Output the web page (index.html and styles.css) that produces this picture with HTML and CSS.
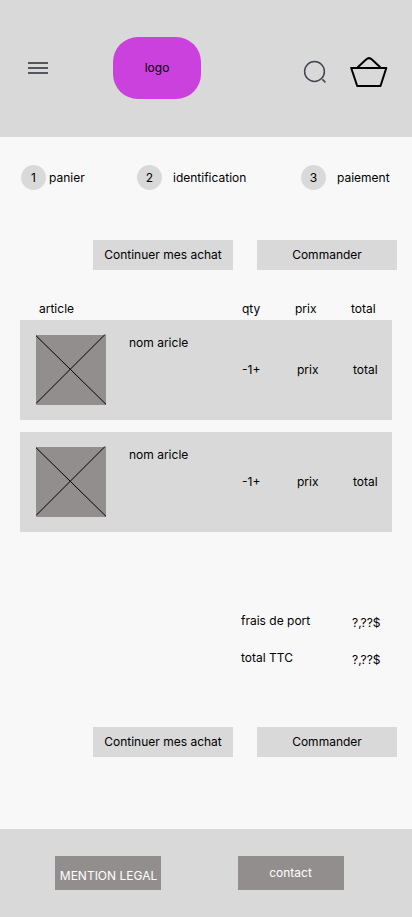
FILE: index.html
```html
<!DOCTYPE html>
<html lang="fr">
<head>
<meta charset="utf-8">
<meta name="viewport" content="width=device-width, initial-scale=1">
<title>Panier</title>
<link rel="stylesheet" href="styles.css">
</head>
<body>
<header class="header">
  <svg class="menu" width="20" height="12" viewBox="0 0 20 12" fill="#54575c"><path d="M0 0h20v2H0zM0 5h20v2H0zM0 10h20v2H0z"/></svg>
  <div class="logo">logo</div>
  <svg class="search" width="24" height="24" viewBox="0 0 24 24" fill="none" stroke="#41454c" stroke-width="1.5"><circle cx="11.5" cy="11.5" r="9.9"/><path d="M19.4 19.4l3 3"/></svg>
  <svg class="basket" width="38" height="32" viewBox="0 0 38 32" fill="none" stroke="#000" stroke-width="2" stroke-linejoin="round"><path d="M1.2 12H36.3L30.5 30H7.2zM7.5 11.5L16.1 3.4Q19 .9 21.9 3.4L30.5 11.5"/></svg>
</header>
<main>
  <ol class="steps">
    <li class="step"><span class="num">1</span>panier</li>
    <li class="step"><span class="num">2</span>identification</li>
    <li class="step"><span class="num">3</span>paiement</li>
  </ol>
  <div class="actions"><a class="button">Continuer mes achat</a><a class="button">Commander</a></div>
  <section class="cart">
    <div class="heads"><span>article</span><span>qty</span><span>prix</span><span>total</span></div>
    <article class="item">
      <svg class="thumb" width="70" height="71" viewBox="0 -1 70 71" stroke="#000"><path d="M0 0h70v70H0z" fill="#928e8d" stroke="none"/><path d="M0 .7L70 69.3M0 68.5L69-.5" fill="none"/></svg>
      <span class="name">nom aricle</span><span>-1+</span><span>prix</span><span>total</span>
    </article>
    <article class="item">
      <svg class="thumb" width="70" height="71" viewBox="0 -1 70 71" stroke="#000"><path d="M0 0h70v70H0z" fill="#928e8d" stroke="none"/><path d="M0 .7L70 69.3M0 68.5L69-.5" fill="none"/></svg>
      <span class="name">nom aricle</span><span>-1+</span><span>prix</span><span>total</span>
    </article>
  </section>
  <dl class="totals">
    <dt>frais de port</dt><dd>?,??$</dd>
    <dt>total TTC</dt><dd>?,??$</dd>
  </dl>
  <div class="actions"><a class="button">Continuer mes achat</a><a class="button">Commander</a></div>
</main>
<footer class="footer"><a class="link legal">MENTION LEGAL</a><a class="link contact">contact</a></footer>
</body>
</html>
```
FILE: styles.css
```css
* { box-sizing: border-box; }
body {
  margin: 0;
  min-height: 917px;
  display: flex;
  flex-direction: column;
  background: #f8f8f8;
  color: #000;
  font: 12px/15px Inter, sans-serif;
  white-space: nowrap;
}
.header {
  height: 137px;
  display: flex;
  align-items: flex-start;
  background: #d9d9d9;
}
.menu { margin: 62px 0 0 28px; }
.logo {
  width: 88px;
  height: 62px;
  margin: 37px 0 0 65px;
  padding-bottom: 1px;
  display: flex;
  align-items: center;
  justify-content: center;
  border-radius: 25px;
  background: #cb41dd;
}
.search { margin: 60px 0 0 102px; }
.basket { margin: 56px 0 0 23px; }
main { flex: 1; }
.steps {
  list-style: none;
  margin: 28px 0 0;
  padding: 0 0 0 21px;
  display: grid;
  grid-template-columns: 116px 164px auto;
}
.step { display: flex; align-items: center; gap: 11px; }
.step:first-child { gap: 3px; }
.num {
  width: 25px;
  height: 25px;
  line-height: 25px;
  text-align: center;
  border-radius: 50%;
  background: #d9d9d9;
}
.actions { display: flex; gap: 24px; margin: 50px 0 0 93px; }
.button {
  width: 140px;
  height: 30px;
  line-height: 30px;
  text-align: center;
  background: #d9d9d9;
}
.cart {
  width: 372px;
  margin: 31px 0 0 20px;
}
.heads {
  height: 19px;
  display: grid;
  grid-template-columns: 203px 53px 56px auto;
  padding-left: 19px;
}
.item {
  height: 100px;
  display: grid;
  grid-template-columns: 93px 113px 55px 56px auto;
  align-items: center;
  padding: 0 0 2px 16px;
  background: #d9d9d9;
}
.item + .item { margin-top: 12px; }
.thumb { display: block; margin-top: 1px; }
.name { align-self: start; margin-top: 15px; }
.totals {
  display: grid;
  grid-template-columns: 111px auto;
  row-gap: 20px;
  margin: 81px 0 0 241px;
}
.totals dd { margin: 2px 0 0; }
.totals + .actions { margin-top: 60px; }
.footer {
  height: 88px;
  display: flex;
  gap: 77px;
  padding: 27px 0 0 55px;
  background: #d9d9d9;
}
.link {
  width: 106px;
  height: 34px;
  line-height: 34px;
  text-align: center;
  color: #fff;
  background: #928e8d;
}
.legal { line-height: 40px; padding-left: 1px; }
.contact { padding-right: 1px; }
```
